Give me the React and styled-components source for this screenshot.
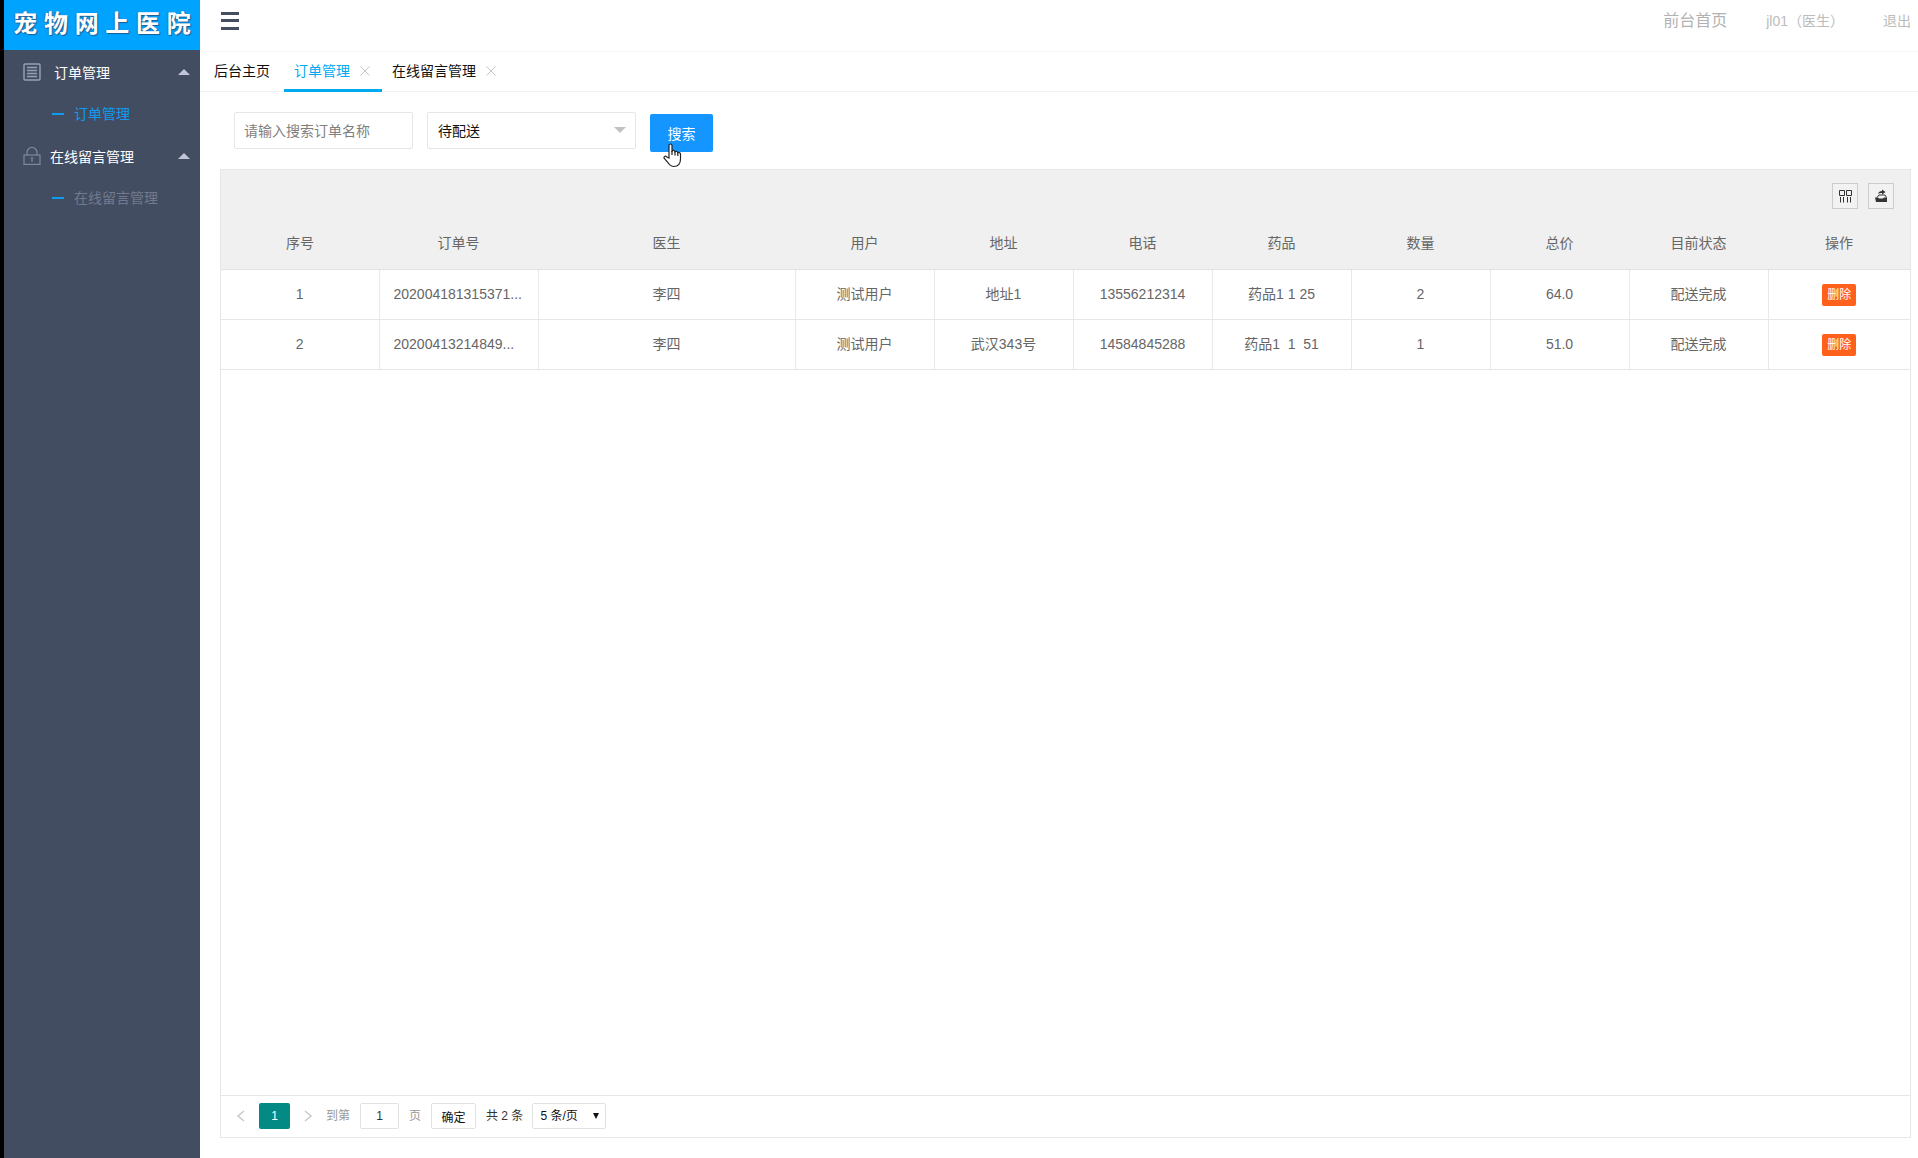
import React, { useState } from 'react';
import styled, { createGlobalStyle } from 'styled-components';

const GlobalStyle = createGlobalStyle`
  * {
    box-sizing: border-box;
  }

  body {
    margin: 0;
    background: #fff;
    color: #666;
    font: 14px/24px 'Liberation Sans', 'Noto Sans CJK SC', sans-serif;
  }

  button, input, select {
    font-family: inherit;
  }

  a {
    color: inherit;
    text-decoration: none;
  }
`;

const Page = styled.div`
  display: flex;
  min-height: 100vh;
  border-left: 4px solid #000;
`;

const Sidebar = styled.aside`
  flex: 0 0 196px;
  background: #434d61;
`;

const Logo = styled.h1`
  height: 50px;
  margin: 0;
  background: #00a4ff;
  color: #fff;
  font-size: 24px;
  font-weight: 700;
  line-height: 48px;
  text-align: center;
  white-space: nowrap;
  text-shadow: 1px 1px 1px #1c5c92, -1px 0 1px #2a78b5;
`;

const MenuTitle = styled.button`
  display: flex;
  align-items: center;
  width: 100%;
  height: 44px;
  padding: 0 10px 0 19px;
  border: 0;
  background: none;
  color: #fff;
  font-size: 14px;
  cursor: pointer;

  svg {
    flex: none;
  }

  span {
    flex: 1;
    margin-left: ${props => props.$gap}px;
    text-align: left;
  }
`;

const Caret = styled.i`
  border: 6px solid transparent;
  border-top: 0;
  border-bottom-color: #c0c6d8;
`;

const MenuLink = styled.a`
  display: flex;
  align-items: center;
  height: 40px;
  padding-left: 48px;
  color: ${props => props.$active ? '#0f9bf2' : '#727a8d'};

  &:before {
    content: '';
    width: 12px;
    height: 2px;
    margin-right: 10px;
    background: #0f9bf2;
  }
`;

const Main = styled.div`
  display: flex;
  flex: 1;
  flex-direction: column;
  min-width: 0;
`;

const Header = styled.header`
  display: flex;
  align-items: center;
  height: 52px;
  padding: 0 7px 10px 21px;
  border-bottom: 1px solid #f6f6f6;
`;

const MenuToggle = styled.button`
  display: flex;
  margin-right: auto;
  padding: 0;
  border: 0;
  background: none;
`;

const HeaderLink = styled.a`
  margin-left: ${props => props.$gap || 0}px;
  color: ${props => props.$large ? '#b2b2b2' : '#bcbcbc'};
  font-size: ${props => props.$large ? 16 : 14}px;
`;

const Tabs = styled.nav`
  display: flex;
  height: 40px;
  border-bottom: 1px solid #f3f3f3;
`;

const Tab = styled.div`
  display: flex;
  align-items: center;
  gap: 10px;
  height: 40px;
  padding: 1px ${props => props.$closable ? 12 : 14}px 0 ${props => props.$closable ? 10 : 14}px;
  border-bottom: 3px solid ${props => props.$active ? '#00a9f1' : 'transparent'};
  color: ${props => props.$active ? '#00a9f1' : '#111'};
`;

const CloseButton = styled.button`
  display: flex;
  padding: 0;
  border: 0;
  background: none;
  color: #c4c4c4;
`;

const Content = styled.main`
  display: flex;
  flex: 1;
  flex-direction: column;
  padding: 20px 7px 20px 20px;
`;

const SearchForm = styled.form`
  display: flex;
  gap: 14px;
  height: 57px;
  padding-left: 14px;
`;

const TextInput = styled.input`
  width: 179px;
  height: 37px;
  padding: 0 9px;
  border: 1px solid #e6e6e6;
  border-radius: 2px;
  color: #333;
  font-size: 14px;

  &::placeholder {
    color: #808080;
  }
`;

const SelectBox = styled.div`
  position: relative;
  width: 209px;
  height: 37px;

  select {
    appearance: none;
    width: 100%;
    height: 100%;
    padding: 0 10px;
    border: 1px solid #e6e6e6;
    border-radius: 2px;
    background: #fff;
    color: #111;
    font-size: 14px;
  }

  &:after {
    content: '';
    position: absolute;
    top: 15px;
    right: 10px;
    border: 6px solid transparent;
    border-top-color: #c2c2c2;
    border-bottom: 0;
    pointer-events: none;
  }
`;

const SearchButton = styled.button`
  position: relative;
  width: 63px;
  height: 38px;
  margin-top: 2px;
  padding: 0;
  border: 0;
  border-radius: 2px;
  background: #1495ff;
  color: #fff;
  font-size: 14px;
`;

const Pointer = styled.svg`
  position: absolute;
  top: 29px;
  left: 13px;
`;

const TablePanel = styled.section`
  display: flex;
  flex: 1;
  flex-direction: column;
  border: 1px solid #e6e6e6;
`;

const Toolbar = styled.div`
  display: flex;
  justify-content: flex-end;
  gap: 10px;
  height: 49px;
  padding: 13px 16px 0;
  background: #f0f0f0;
`;

const ToolButton = styled.button`
  display: flex;
  align-items: center;
  justify-content: center;
  width: 26px;
  height: 26px;
  padding: 0;
  border: 1px solid #ccc;
  background: #f2f2f2;
  color: #333;
`;

const Table = styled.table`
  width: 100%;
  border-collapse: collapse;
  table-layout: fixed;

  th, td {
    overflow: hidden;
    padding: 0 14px;
    font-weight: 400;
    text-align: center;
    text-overflow: ellipsis;
    white-space: pre;
  }

  th {
    height: 50px;
    padding-bottom: 2px;
    background: #f0f0f0;
    border-bottom: 1px solid #e2e2e2;
  }

  td {
    height: 50px;
    border-right: 1px solid #e9e9e9;
    border-bottom: 1px solid #e6e6e6;
  }

  td:nth-child(2) {
    text-align: left;
  }

  td:last-child {
    border-right: 0;
  }
`;

const DeleteButton = styled.button`
  height: 22px;
  padding: 0 5px;
  border: 0;
  border-radius: 2px;
  background: #ff601c;
  color: #fff;
  font-size: 12px;
  line-height: 22px;
  vertical-align: middle;
`;

const Pager = styled.footer`
  display: flex;
  align-items: center;
  height: 42px;
  margin-top: auto;
  padding: 0 0 1px 15px;
  border-top: 1px solid #e6e6e6;
  color: #999;
  font-size: 12px;

  label {
    display: flex;
    align-items: center;
    gap: 10px;
    margin-left: 13px;
  }
`;

const PagerArrow = styled.button`
  display: flex;
  padding: 0;
  border: 0;
  background: none;
  color: #c8c8c8;
`;

const CurrentPage = styled.button`
  width: 31px;
  height: 26px;
  margin: 0 13px;
  padding: 0;
  border: 0;
  border-radius: 2px;
  background: #048a85;
  color: #fff;
  font-size: 12px;
`;

const PageInput = styled.input`
  width: 39px;
  height: 26px;
  padding: 0;
  border: 1px solid #e2e2e2;
  border-radius: 2px;
  color: #333;
  font-size: 12px;
  text-align: center;
`;

const ConfirmButton = styled.button`
  width: 45px;
  height: 26px;
  margin: 0 10px;
  padding: 0;
  border: 1px solid #e2e2e2;
  border-radius: 2px;
  background: #fff;
  color: #111;
  font-size: 12px;
`;

const Total = styled.span`
  color: #333;
`;

const PageSize = styled.div`
  position: relative;
  width: 74px;
  height: 26px;
  margin-left: 9px;

  select {
    appearance: none;
    width: 100%;
    height: 100%;
    padding: 0 7px;
    border: 1px solid #e2e2e2;
    border-radius: 2px;
    background: #fff;
    color: #111;
    font-size: 12px;
  }

  &:after {
    content: '';
    position: absolute;
    top: 10px;
    right: 7px;
    border: 3px solid transparent;
    border-top: 6px solid #111;
    border-bottom: 0;
    pointer-events: none;
  }
`;

const ListIcon = () => (
  <svg width="18" height="18" viewBox="0 0 18 18" fill="none" stroke="#98a1b5" strokeWidth="1.4">
    <rect x="1" y="1" width="16" height="16" rx="1" />
    <path d="M4 4.500h10M4 7.500h10M4 10.500h10M4 13.500h10" />
  </svg>
);

const LockIcon = () => (
  <svg width="18" height="18" viewBox="0 0 18 18" fill="none" stroke="#7f889b" strokeWidth="1.2">
    <rect x="1" y="8" width="16" height="9.400" />
    <path d="M4 8V5.500a5 5 0 0 1 10 0V8M9 11v4M7.500 11h3" />
  </svg>
);

const CloseIcon = () => (
  <svg width="10" height="10" viewBox="0 0 10 10" stroke="currentColor" strokeWidth="1">
    <path d="M0.500 0.500l9 9M9.500 0.500l-9 9" />
  </svg>
);

const columns = [
  { title: '序号', width: 158 },
  { title: '订单号', width: 159 },
  { title: '医生', width: 257 },
  { title: '用户', width: 139 },
  { title: '地址', width: 139 },
  { title: '电话', width: 139 },
  { title: '药品', width: 139 },
  { title: '数量', width: 139 },
  { title: '总价', width: 139 },
  { title: '目前状态', width: 139 },
  { title: '操作' }
];

const orders = [
  ['1', '202004181315371...', '李四', '测试用户', '地址1', '13556212314', '药品1 1 25', '2', '64.0', '配送完成'],
  ['2', '20200413214849...', '李四', '测试用户', '武汉343号', '14584845288', '药品1  1  51', '1', '51.0', '配送完成']
];

const App = () => {
  const [keyword, setKeyword] = useState('');
  const [page, setPage] = useState('1');

  return (
    <Page>
      <GlobalStyle />
      <Sidebar>
        <Logo>宠 物 网 上 医 院</Logo>
        <MenuTitle $gap={13}><ListIcon /><span>订单管理</span><Caret /></MenuTitle>
        <MenuLink href="#order" $active>订单管理</MenuLink>
        <MenuTitle $gap={9}><LockIcon /><span>在线留言管理</span><Caret /></MenuTitle>
        <MenuLink href="#message">在线留言管理</MenuLink>
      </Sidebar>

      <Main>
        <Header>
          <MenuToggle aria-label="菜单">
            <svg width="18" height="18" viewBox="0 0 18 18" stroke="#454d60" strokeWidth="3">
              <path d="M0 1.500h18M0 8.500h18M0 16.500h18" />
            </svg>
          </MenuToggle>
          <HeaderLink href="#home" $large>前台首页</HeaderLink>
          <HeaderLink href="#user" $gap={39}>jl01（医生）</HeaderLink>
          <HeaderLink href="#logout" $gap={39}>退出</HeaderLink>
        </Header>

        <Tabs>
          <Tab>后台主页</Tab>
          <Tab $closable $active>订单管理<CloseButton aria-label="关闭"><CloseIcon /></CloseButton></Tab>
          <Tab $closable>在线留言管理<CloseButton aria-label="关闭"><CloseIcon /></CloseButton></Tab>
        </Tabs>

        <Content>
          <SearchForm onSubmit={e => e.preventDefault()}>
            <TextInput
              aria-label="订单名称"
              placeholder="请输入搜索订单名称"
              value={keyword}
              onChange={e => setKeyword(e.target.value)}
            />
            <SelectBox>
              <select aria-label="状态" defaultValue="待配送">
                <option>待配送</option>
                <option>配送完成</option>
              </select>
            </SelectBox>
            <SearchButton type="submit">
              搜索
              <Pointer width="19" height="25" viewBox="0 0 19 25" fill="#fff" stroke="#222" strokeWidth="1.2">
                <path d="M6 15V2.500a1.500 1.500 0 0 1 3 0V8c1-1 2.700-.6 3 .8 1-.8 2.500-.4 2.800.9 1.200-.6 2.700 0 2.700 1.500V16c0 5-2.500 7.500-6.500 7.500-3.500 0-5-2-6.500-4.500L1.300 15.500c-1-1.500.7-3 2.200-1.800z" />
                <path d="M9 8v4M12 9v3.500M14.800 10v3" />
              </Pointer>
            </SearchButton>
          </SearchForm>

          <TablePanel>
            <Toolbar>
              <ToolButton aria-label="筛选列">
                <svg width="14" height="14" viewBox="0 0 14 14" fill="none" stroke="currentColor">
                  <path d="M1.500 1.500h5v5h-5zM8.500 1.500h5v5h-5zM2.500 8v5.500M5.500 8v5.500M9.500 8v5.500M12.500 8v5.500" />
                </svg>
              </ToolButton>
              <ToolButton aria-label="导出">
                <svg width="14" height="14" viewBox="0 0 14 14" fill="currentColor">
                  <path d="M1 8.500h3l1 1h4l1-1h3V13H2z" />
                  <path d="M3 8.500L5 6h6l1.500 2.500" fill="none" stroke="currentColor" />
                  <path d="M4 5c.5-2 2-3 4-3V.5L11.500 3 8 5.500V4C6.500 4 5 4.200 4 5z" />
                </svg>
              </ToolButton>
            </Toolbar>

            <Table>
              <colgroup>
                {columns.map(col => <col key={col.title} width={col.width} />)}
              </colgroup>
              <thead>
                <tr>
                  {columns.map(col => <th key={col.title}>{col.title}</th>)}
                </tr>
              </thead>
              <tbody>
                {orders.map(order => (
                  <tr key={order[0]}>
                    {order.map((value, i) => <td key={i}>{value}</td>)}
                    <td><DeleteButton>删除</DeleteButton></td>
                  </tr>
                ))}
              </tbody>
            </Table>

            <Pager>
              <PagerArrow aria-label="上一页">
                <svg width="10" height="12" viewBox="0 0 10 12" fill="none" stroke="currentColor" strokeWidth="1.500">
                  <path d="M8 1L2 6l6 5" />
                </svg>
              </PagerArrow>
              <CurrentPage>1</CurrentPage>
              <PagerArrow aria-label="下一页">
                <svg width="10" height="12" viewBox="0 0 10 12" fill="none" stroke="currentColor" strokeWidth="1.500">
                  <path d="M2 1l6 5-6 5" />
                </svg>
              </PagerArrow>
              <label>
                到第
                <PageInput value={page} onChange={e => setPage(e.target.value)} />
                页
              </label>
              <ConfirmButton>确定</ConfirmButton>
              <Total>共 2 条</Total>
              <PageSize>
                <select aria-label="每页条数" defaultValue="5">
                  <option value="5">5 条/页</option>
                  <option value="10">10 条/页</option>
                </select>
              </PageSize>
            </Pager>
          </TablePanel>
        </Content>
      </Main>
    </Page>
  );
};

export default App;
